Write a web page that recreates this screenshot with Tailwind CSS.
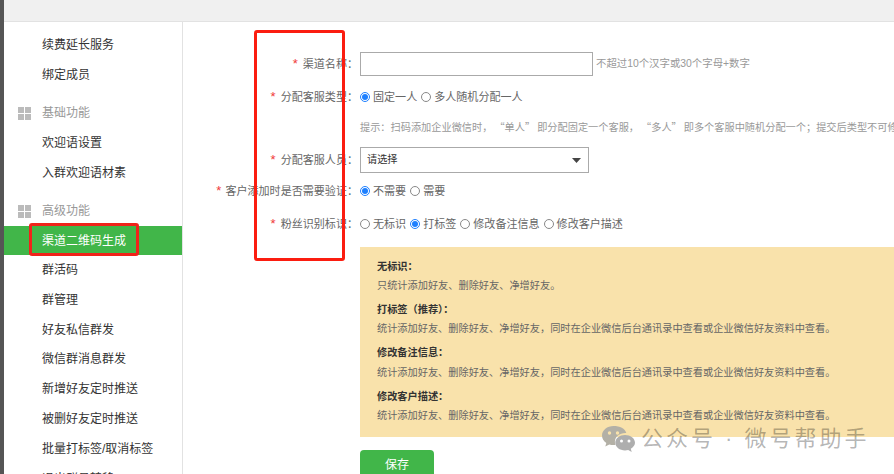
<!DOCTYPE html>
<html lang="zh">
<head>
<meta charset="utf-8">
<script src="https://cdn.jsdelivr.net/npm/@tailwindcss/browser@4"></script>
<title>渠道二维码生成</title>
</head>
<body class="bg-white">
<div class="relative flex h-[474px] w-[894px] overflow-hidden bg-white font-['Liberation_Sans','Noto_Sans_CJK_SC',sans-serif]">
  <div class="w-[4px] shrink-0 bg-[#555555]"></div>
  <div class="flex min-w-0 flex-1 flex-col">
    <div class="h-[22px] shrink-0 border-b border-[#e2e2e2] bg-[#f0f0f0]"></div>
    <div class="flex min-h-0 flex-1">
      <nav class="w-[179px] shrink-0 border-r border-[#e2e2e2] pt-[8px] text-[12px] text-[#333333]">
        <div class="flex h-[30px] items-center pl-[38px]">续费延长服务</div>
        <div class="flex h-[30px] items-center pl-[38px]">绑定成员</div>
        <div class="mt-[8px] flex h-[30px] items-center gap-[11px] pl-[14px] text-[#999999]">
          <span class="grid h-[13px] w-[13px] grid-cols-2 gap-px"><i class="bg-[#bbbbbb]"></i><i class="bg-[#bbbbbb]"></i><i class="bg-[#bbbbbb]"></i><i class="bg-[#bbbbbb]"></i></span>基础功能
        </div>
        <div class="flex h-[30px] items-center pl-[38px]">欢迎语设置</div>
        <div class="flex h-[30px] items-center pl-[38px]">入群欢迎语材素</div>
        <div class="mt-[8px] flex h-[30px] items-center gap-[11px] pl-[14px] text-[#999999]">
          <span class="grid h-[13px] w-[13px] grid-cols-2 gap-px"><i class="bg-[#bbbbbb]"></i><i class="bg-[#bbbbbb]"></i><i class="bg-[#bbbbbb]"></i><i class="bg-[#bbbbbb]"></i></span>高级功能
        </div>
        <div class="flex h-[29px] items-center bg-[#41b649] pl-[38px] text-white">渠道二维码生成</div>
        <div class="flex h-[29.85px] items-center pl-[38px]">群活码</div>
        <div class="flex h-[29.85px] items-center pl-[38px]">群管理</div>
        <div class="flex h-[29.85px] items-center pl-[38px]">好友私信群发</div>
        <div class="flex h-[29.85px] items-center pl-[38px]">微信群消息群发</div>
        <div class="flex h-[29.85px] items-center pl-[38px]">新增好友定时推送</div>
        <div class="flex h-[29.85px] items-center pl-[38px]">被删好友定时推送</div>
        <div class="flex h-[29.85px] items-center pl-[38px]">批量打标签/取消标签</div>
        <div class="flex h-[29.85px] items-center pl-[38px]">退出群员转移</div>
      </nav>
      <main class="min-w-0 flex-1 overflow-hidden pt-[30px] text-[11.05px] text-[#666666]">
        <div class="flex h-[24px] items-center">
          <label class="w-[175px] shrink-0 text-right"><span class="mr-[5px] text-[13px] text-[#f03a3a]">*</span>渠道名称：</label>
          <div class="ml-[2px] h-[24px] w-[233px] shrink-0 border border-[#aaaaaa]"></div>
          <span class="ml-[3px] whitespace-nowrap text-[10.4px] text-[#999999]">不超过10个汉字或30个字母+数字</span>
        </div>
        <div class="mt-[11px] flex h-[20px] items-center">
          <label class="w-[175px] shrink-0 text-right"><span class="mr-[5px] text-[13px] text-[#f03a3a]">*</span>分配客服类型：</label>
          <div class="ml-[2px] flex items-center whitespace-nowrap">
            <span class="flex h-[10px] w-[10px] items-center justify-center rounded-full border border-[#1e80ff]"><i class="h-[6px] w-[6px] rounded-full bg-[#1e80ff]"></i></span>
            <span class="ml-[3px]">固定一人</span>
            <span class="ml-[4px] h-[10px] w-[10px] rounded-full border border-[#888888]"></span>
            <span class="ml-[3px]">多人随机分配一人</span>
          </div>
        </div>
        <div class="mt-[10px] flex h-[20px] items-center whitespace-pre pl-[177px] font-['Noto_Sans_CJK_SC',sans-serif] text-[10.2px] text-[#999999] [word-spacing:-0.3px]">提示：扫码添加企业微信时， “单人” 即分配固定一个客服， “多人” 即多个客服中随机分配一个；提交后类型不可修改</div>
        <div class="mt-[10px] flex h-[26px] items-center">
          <label class="w-[175px] shrink-0 text-right"><span class="mr-[5px] text-[13px] text-[#f03a3a]">*</span>分配客服人员：</label>
          <div class="ml-[2px] flex h-[26px] w-[229px] shrink-0 items-center justify-between border border-[#aaaaaa] pl-[6px] pr-[7px] text-[10.2px] text-[#333333]">
            <span>请选择</span>
            <svg width="9" height="5" viewBox="0 0 9 5"><path d="M0 0h9L4.500 5z" fill="#444444"/></svg>
          </div>
        </div>
        <div class="mt-[8px] flex h-[20px] items-center">
          <label class="w-[175px] shrink-0 whitespace-nowrap text-right"><span class="mr-[4px] text-[13px] text-[#f03a3a]">*</span>客户添加时是否需要验证：</label>
          <div class="ml-[2px] flex items-center whitespace-nowrap">
            <span class="flex h-[10px] w-[10px] items-center justify-center rounded-full border border-[#1e80ff]"><i class="h-[6px] w-[6px] rounded-full bg-[#1e80ff]"></i></span>
            <span class="ml-[3px]">不需要</span>
            <span class="ml-[4px] h-[10px] w-[10px] rounded-full border border-[#888888]"></span>
            <span class="ml-[3px]">需要</span>
          </div>
        </div>
        <div class="mt-[13px] flex h-[20px] items-center">
          <label class="w-[175px] shrink-0 text-right"><span class="mr-[5px] text-[13px] text-[#f03a3a]">*</span>粉丝识别标识：</label>
          <div class="ml-[2px] flex items-center whitespace-nowrap">
            <span class="h-[10px] w-[10px] rounded-full border border-[#888888]"></span>
            <span class="ml-[3px]">无标识</span>
            <span class="ml-[4px] flex h-[10px] w-[10px] items-center justify-center rounded-full border border-[#1e80ff]"><i class="h-[6px] w-[6px] rounded-full bg-[#1e80ff]"></i></span>
            <span class="ml-[3px]">打标签</span>
            <span class="ml-[4px] h-[10px] w-[10px] rounded-full border border-[#888888]"></span>
            <span class="ml-[3px]">修改备注信息</span>
            <span class="ml-[4px] h-[10px] w-[10px] rounded-full border border-[#888888]"></span>
            <span class="ml-[3px]">修改客户描述</span>
          </div>
        </div>
        <div class="ml-[177px] mt-[13px] h-[190px] w-[600px] whitespace-nowrap bg-[#f9e2ab] pl-[17px] pt-[11px] text-[10.2px] leading-[18px]">
          <div class="mb-[6px] flex flex-col gap-px"><b class="font-bold text-[#333333]">无标识：</b><p>只统计添加好友、删除好友、净增好友。</p></div>
          <div class="mb-[6px] flex flex-col gap-px"><b class="font-bold text-[#333333]">打标签（推荐）：</b><p>统计添加好友、删除好友、净增好友，同时在企业微信后台通讯录中查看或企业微信好友资料中查看。</p></div>
          <div class="mb-[6px] flex flex-col gap-[2px]"><b class="font-bold text-[#333333]">修改备注信息：</b><p>统计添加好友、删除好友、净增好友，同时在企业微信后台通讯录中查看或企业微信好友资料中查看。</p></div>
          <div class="flex flex-col gap-px"><b class="font-bold text-[#333333]">修改客户描述：</b><p>统计添加好友、删除好友、净增好友，同时在企业微信后台通讯录中查看或企业微信好友资料中查看。</p></div>
        </div>
        <button class="ml-[177px] mt-[13px] h-[30px] w-[74px] rounded-[4px] bg-[#41b649] text-[12px] text-white">保存</button>
      </main>
    </div>
  </div>

  <div class="pointer-events-none absolute left-[254px] top-[30px] h-[231px] w-[91px] rounded-[3px] border-[3px] border-[#fb1d10]"></div>
  <div class="pointer-events-none absolute left-[29px] top-[223px] h-[33px] w-[110px] rounded-[3px] border-[3px] border-[#f0231a]"></div>

  <div class="pointer-events-none absolute left-[602px] top-[425px] flex items-center">
    <svg width="33" height="28" viewBox="0 0 33 28">
      <path d="M11.500 1C5.200 1 0 5.200 0 10.500c0 3 1.700 5.600 4.300 7.400L3.300 21.500l4-2.100c1.300.4 2.700.6 4.200.6 1 0 1.800-.1 2-.2-.5-1.100-.6-2.100-.6-3 0-5 4.700-8.800 10.400-8.800h1C23.200 3.600 17.800 1 11.500 1z" fill="#b3b0a6"/>
      <circle cx="7.500" cy="8" r="1.700" fill="#f9e2ab"/><circle cx="15.500" cy="8" r="1.700" fill="#f9e2ab"/>
      <path d="M23 10c-5.300 0-9.700 3.400-9.700 7.700s4.400 7.700 9.700 7.700c1.100 0 2.200-.1 3.200-.4l3.500 2-.9-3.200c2.500-1.500 4.200-3.800 4.200-6.100 0-4.300-4.500-7.700-10-7.700z" fill="#aeaeae"/>
      <circle cx="19.500" cy="16" r="1.500" fill="#ffffff"/><circle cx="27" cy="16" r="1.500" fill="#ffffff"/>
    </svg>
    <span class="ml-[6px] whitespace-pre text-[22px] leading-[26px] tracking-[3px] text-black/30">公众号 · 微号帮助手</span>
  </div>
</div>
</body>
</html>
